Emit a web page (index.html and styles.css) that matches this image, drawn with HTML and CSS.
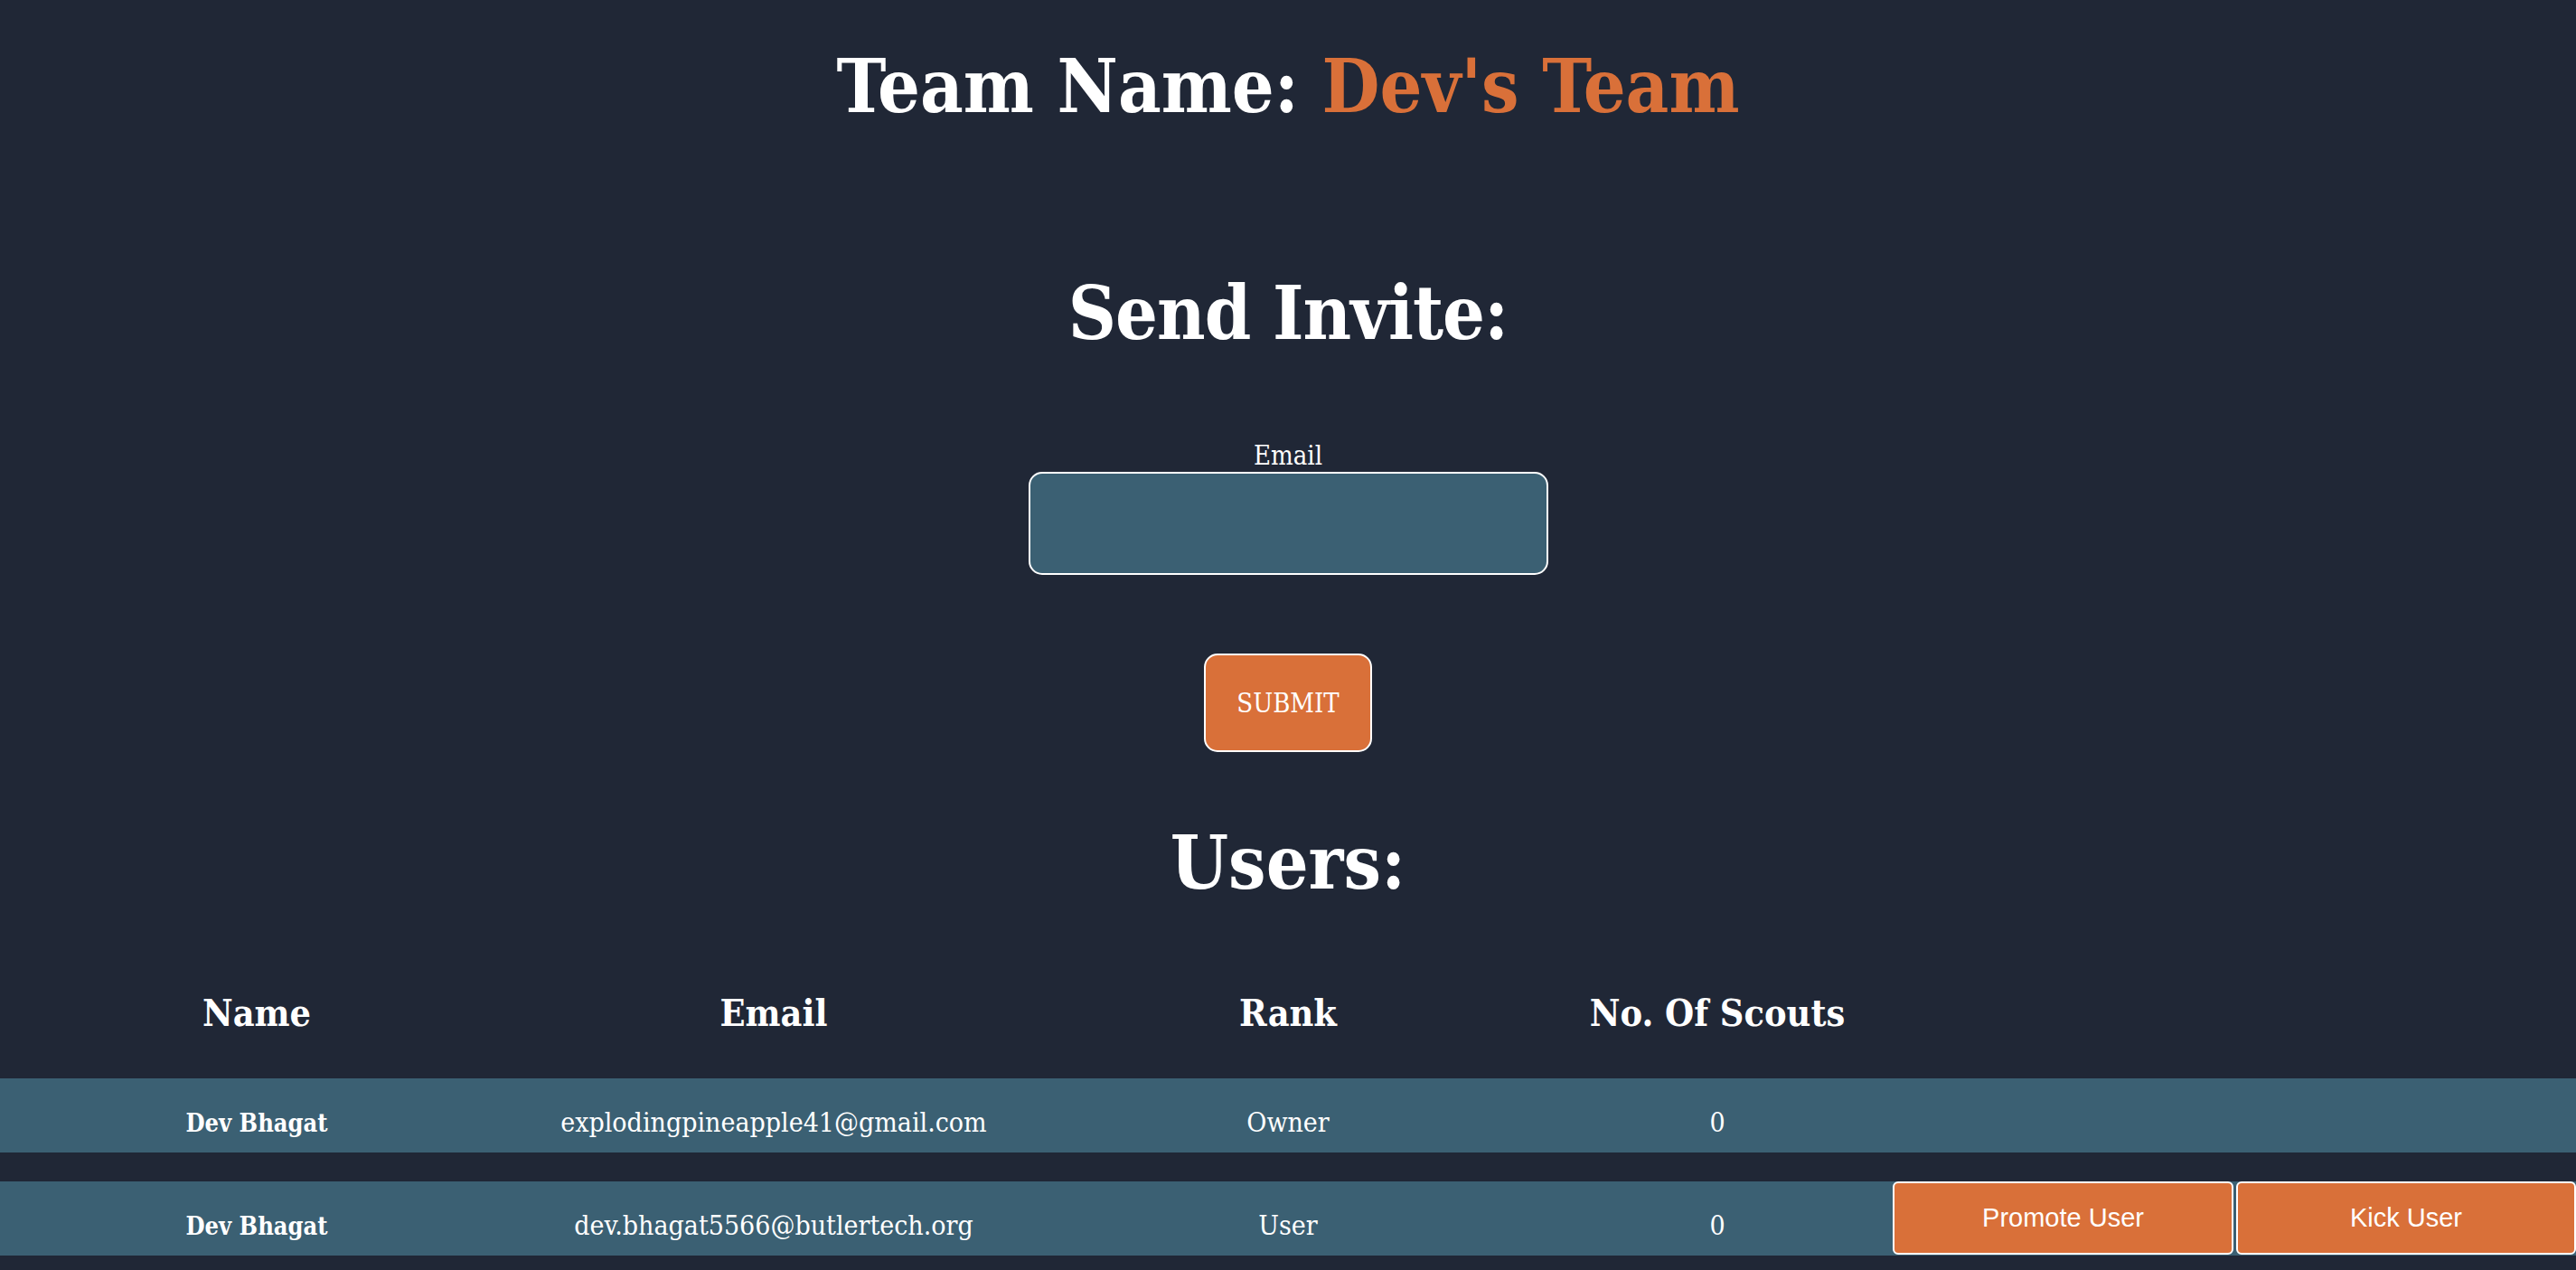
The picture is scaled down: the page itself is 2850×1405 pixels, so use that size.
FILE: index.html
```html
<!DOCTYPE html>
<html lang="en">
<head>
<meta charset="utf-8">
<title>Team</title>
<link rel="stylesheet" href="styles.css">
</head>
<body>
<main class="page">
  <h1 class="team-title">Team Name: <span class="accent">Dev's Team</span></h1>

  <section class="invite">
    <h1 class="section-title invite-title">Send Invite:</h1>
    <form class="invite-form">
      <label class="field-label" for="email">Email</label>
      <input class="field-input" id="email" type="email">
      <button class="submit-btn" type="button">SUBMIT</button>
    </form>
  </section>

  <h1 class="section-title users-title">Users:</h1>

  <table class="users-table">
    <colgroup>
      <col class="col-name">
      <col class="col-email">
      <col class="col-rank">
      <col class="col-scouts">
      <col class="col-promote">
      <col class="col-kick">
    </colgroup>
    <thead>
      <tr class="head-row">
        <th>Name</th>
        <th>Email</th>
        <th>Rank</th>
        <th>No. Of Scouts</th>
        <th></th>
        <th></th>
      </tr>
    </thead>
    <tbody>
      <tr class="user-row">
        <td class="cell cell-name">Dev Bhagat</td>
        <td class="cell">explodingpineapple41@gmail.com</td>
        <td class="cell">Owner</td>
        <td class="cell">0</td>
        <td class="cell-action"></td>
        <td class="cell-action"></td>
      </tr>
      <tr class="user-row">
        <td class="cell cell-name">Dev Bhagat</td>
        <td class="cell">dev.bhagat5566@butlertech.org</td>
        <td class="cell">User</td>
        <td class="cell">0</td>
        <td class="cell-action"><button class="row-btn promote-btn" type="button">Promote User</button></td>
        <td class="cell-action"><button class="row-btn kick-btn" type="button">Kick User</button></td>
      </tr>
    </tbody>
  </table>
</main>
</body>
</html>
```

FILE: styles.css
```css
html, body {
  margin: 0;
  padding: 0;
  background: #202736;
}

body {
  color: #ffffff;
  font-family: "DejaVu Serif Condensed", "DejaVu Serif", serif;
  overflow: hidden;
}

.page {
  display: flex;
  flex-direction: column;
  align-items: center;
  text-align: center;
}

.team-title,
.section-title {
  font-size: 82px;
  line-height: 1;
  font-weight: bold;
  margin: 0;
}

.team-title {
  margin-top: 54px;
}

.accent {
  color: #d97039;
}

.invite {
  display: flex;
  flex-direction: column;
  align-items: center;
}

.invite-title {
  margin-top: 169px;
  letter-spacing: -1px;
}

.invite-form {
  display: flex;
  flex-direction: column;
  align-items: center;
  margin: 0;
}

.field-label {
  margin-top: 103px;
  font-size: 29px;
  line-height: 1;
}

.field-input {
  box-sizing: border-box;
  margin-top: 3px;
  width: 575px;
  height: 114px;
  background: #3b6073;
  border: 2px solid #ffffff;
  border-radius: 15px;
  color: #ffffff;
  font: inherit;
  font-size: 29px;
  padding: 0 20px;
  outline: none;
}

.submit-btn {
  box-sizing: border-box;
  margin-top: 87px;
  width: 186px;
  height: 109px;
  background: #d97039;
  border: 2px solid #ffffff;
  border-radius: 15px;
  color: #ffffff;
  font-family: "DejaVu Serif Condensed", "DejaVu Serif", serif;
  font-size: 29px;
  padding: 0;
}

.users-title {
  margin-top: 81px;
}

.users-table {
  margin-top: 54px;
  width: 2850px;
  table-layout: fixed;
  border-collapse: separate;
  border-spacing: 0 32px;
  color: #ffffff;
}

.col-name { width: 568px; }
.col-email { width: 576px; }
.col-rank { width: 562px; }
.col-scouts { width: 388px; }
.col-promote { width: 380px; }
.col-kick { width: 376px; }

.head-row {
  height: 80px;
}

.head-row th {
  padding: 0;
  font-size: 41px;
  line-height: 1;
  font-weight: bold;
  text-align: center;
  vertical-align: middle;
}

.user-row {
  height: 82px;
  background: #3b6073;
}

.cell {
  padding: 16px 0 0;
  font-size: 30px;
  line-height: 1;
  text-align: center;
  vertical-align: middle;
  white-space: nowrap;
}

.cell-name {
  font-size: 27px;
  font-weight: bold;
}

.cell-action {
  padding: 0;
  height: 82px;
  vertical-align: top;
  text-align: left;
}

.row-btn {
  box-sizing: border-box;
  display: block;
  height: 81px;
  margin: 0;
  padding: 0;
  background: #d97039;
  border: 2px solid #ffffff;
  border-radius: 6px;
  color: #ffffff;
  font-family: "Liberation Sans", Arial, sans-serif;
  font-size: 29px;
}

.promote-btn {
  width: 377px;
}

.kick-btn {
  width: 376px;
}
```
